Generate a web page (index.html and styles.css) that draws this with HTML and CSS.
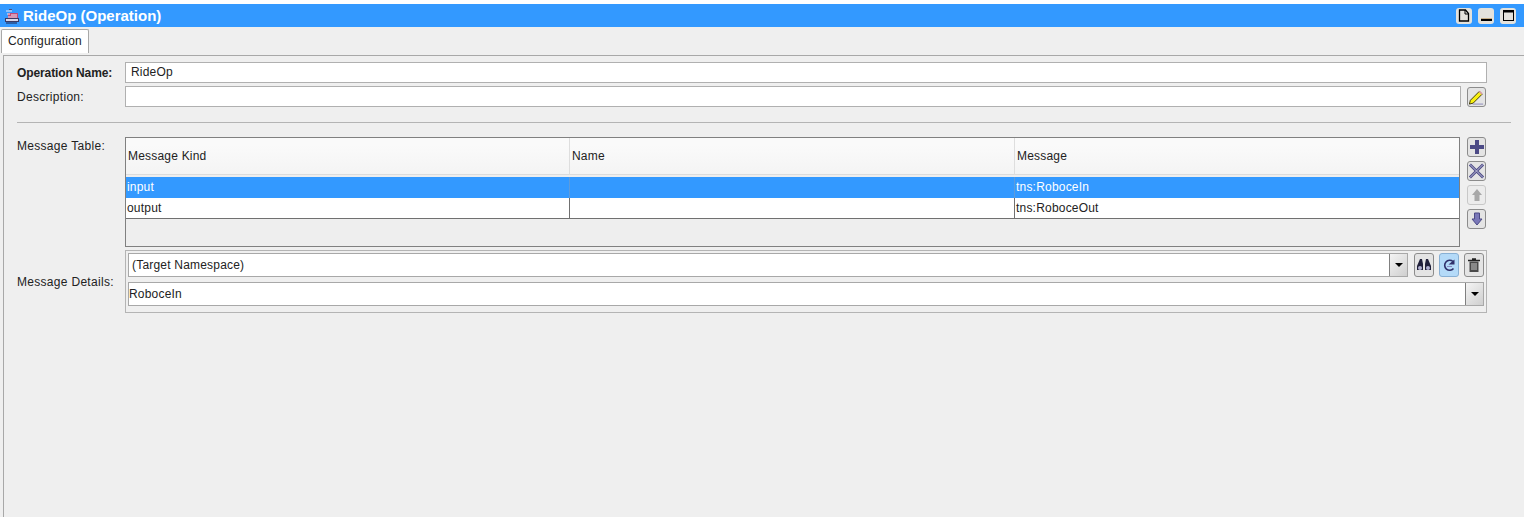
FILE: index.html
```html
<!DOCTYPE html>
<html lang="en">
<head>
<meta charset="utf-8">
<title>RideOp (Operation)</title>
<link rel="stylesheet" href="styles.css">
</head>
<body>
<div class="app">
  <header class="titlebar">
    <svg class="app-icon" width="16" height="16" viewBox="0 0 16 16">
      <rect x="1.500" y="10.500" width="13" height="3" fill="#d8d8ec" stroke="#3a3a66"/>
      <rect x="4" y="5" width="10" height="5" fill="#c04a78"/>
      <path d="M2 3h6M3 6h3M7 7h6M4 9h9" stroke="#e8e8f4"/>
      <path d="M5 1.500h3" stroke="#50507a"/>
      <path d="M2 15h11" stroke="#24244c"/>
    </svg>
    <h1 class="title">RideOp (Operation)</h1>
    <div class="win-buttons">
      <button class="win-btn"><svg width="12" height="13" viewBox="0 0 12 13"><path d="M1.500 1h6l3 3.500v7.500h-9z" fill="none" stroke="#000" stroke-width="1.300"/><path d="M7 1v4h4" fill="none" stroke="#000"/></svg></button>
      <button class="win-btn"><svg width="13" height="13" viewBox="0 0 13 13"><rect x="1" y="10" width="11" height="2" fill="#000"/><rect x="1" y="9" width="11" height="1" fill="#c8b088"/></svg></button>
      <button class="win-btn"><svg width="13" height="13" viewBox="0 0 13 13"><rect x="1.500" y="1.500" width="10" height="10" fill="none" stroke="#000"/><rect x="1" y="1" width="11" height="2.500" fill="#000"/></svg></button>
    </div>
  </header>
  <nav class="tabs"><span class="tab">Configuration</span></nav>
  <main class="panel">
    <div class="form-row row-name">
      <label class="label label-bold">Operation Name:</label>
      <div class="input">RideOp</div>
    </div>
    <div class="form-row row-desc">
      <label class="label">Description:</label>
      <div class="input"></div>
      <button class="icon-btn edit-btn"><svg width="18" height="18" viewBox="0 0 18 18"><path d="M2.500 12.500L12 3l3 3-9.500 9.500-4 1z" fill="#f8f010" stroke="#3a3610"/><path d="M12 3l3 3" stroke="#d8a0a0" stroke-width="2"/><path d="M5 16.500h11" stroke="#8a86b8"/></svg></button>
    </div>
    <hr class="separator">
    <div class="form-row row-table">
      <label class="label label-table">Message Table:</label>
      <div class="table">
        <div class="t-head">
          <span class="t-cell">Message Kind</span><span class="t-cell">Name</span><span class="t-cell">Message</span>
        </div>
        <div class="t-row t-selected">
          <span class="t-cell">input</span><span class="t-cell"></span><span class="t-cell">tns:RoboceIn</span>
        </div>
        <div class="t-row">
          <span class="t-cell">output</span><span class="t-cell"></span><span class="t-cell">tns:RoboceOut</span>
        </div>
      </div>
      <div class="side-buttons">
        <button class="icon-btn"><svg width="16" height="16" viewBox="0 0 16 16"><path d="M6 1h4v5h5v4h-5v5H6v-5H1V6h5z" fill="#4c4a86"/></svg></button>
        <button class="icon-btn"><svg width="18" height="18" viewBox="0 0 18 18"><path d="M2 2l14 14M16 2L2 16" stroke="#4c4a86" stroke-width="3"/><path d="M2 2l14 14M16 2L2 16" stroke="#c8c8e0" stroke-width="1"/></svg></button>
        <button class="icon-btn icon-disabled"><svg width="14" height="14" viewBox="0 0 14 14"><path d="M7 1l5 6H9.500v6h-5V7H2z" fill="#a8a8a8"/></svg></button>
        <button class="icon-btn"><svg width="14" height="14" viewBox="0 0 14 14"><path d="M4.500 1h5v6H12l-5 6-5-6h2.500z" fill="#7a78b8" stroke="#4c4a86"/></svg></button>
      </div>
    </div>
    <div class="form-row row-details">
      <label class="label">Message Details:</label>
      <div class="details">
        <div class="details-line">
          <div class="combo combo-top">
            <span class="combo-text combo-pad">(Target Namespace)</span>
            <span class="combo-arrow"></span>
          </div>
          <button class="icon-btn small"><svg width="16" height="16" viewBox="0 0 16 16"><path d="M4 2h2l1 5v6H1V9zM10 2h2l3 7v4H9V7z" fill="#20203a"/><circle cx="4" cy="11" r="2" fill="#b0b0d0"/><circle cx="12" cy="11" r="2" fill="#b0b0d0"/></svg></button>
          <button class="icon-btn small active"><svg width="16" height="16" viewBox="0 0 16 16"><path d="M12.500 11.500A5 5 0 1 1 12 4.500" fill="none" stroke="#30306a" stroke-width="1.600"/><path d="M7.500 7.500h6v-5z" fill="#30306a"/><path d="M6 9.500h5" stroke="#8888c0"/></svg></button>
          <button class="icon-btn small"><svg width="16" height="16" viewBox="0 0 16 16"><path d="M2 3.500h12M6 2h4" stroke="#222" stroke-width="1.500"/><path d="M3.500 4.500h9V15h-9z" fill="#4a4a4a"/><path d="M6 6v7M8 6v7M10 6v7" stroke="#c8c8c8"/></svg></button>
        </div>
        <div class="combo combo-full">
          <span class="combo-text">RoboceIn</span>
          <span class="combo-arrow"></span>
        </div>
      </div>
    </div>
  </main>
</div>
</body>
</html>
```

FILE: styles.css
```css
* { box-sizing: border-box; }
html, body { margin: 0; height: 100%; }
body {
  background: #fff;
  font-family: "Liberation Sans", Arial, sans-serif;
  font-size: 12px;
  letter-spacing: 0.2px;
  color: #222;
  overflow: hidden;
}
.app {
  height: 517px;
  background: #efefef;
  display: flex;
  flex-direction: column;
  border-top: 4px solid #fff;
}
.titlebar {
  height: 23px;
  background: #3399ff;
  display: flex;
  align-items: center;
  padding: 0 7px 0 4px;
  flex: none;
}
.app-icon { flex: none; margin-right: 3px; }
.title {
  margin: 0;
  font-size: 15px;
  font-weight: bold;
  letter-spacing: 0;
  color: #fff;
  flex: 1;
}
.win-buttons { display: flex; gap: 6px; margin-right: 1px; }
.win-btn {
  width: 16px;
  height: 16px;
  padding: 0;
  border: 0;
  border-radius: 3px;
  background: #e4e2dc;
  display: flex;
  align-items: center;
  justify-content: center;
}
.tabs {
  height: 28px;
  padding: 2px 0 0 1px;
  flex: none;
}
.tab {
  display: inline-block;
  height: 24px;
  width: 88px;
  line-height: 23px;
  text-align: center;
  background: #fff;
  border: 1px solid #a8a8a8;
  border-bottom: 0;
  border-radius: 2px 2px 0 0;
}
.panel {
  flex: 1;
  margin-left: 3px;
  border: 1px solid #a8a8a8;
  border-right: 0;
  border-bottom: 0;
  padding: 6px 13px 0 13px;
  display: flex;
  flex-direction: column;
}
.form-row { display: flex; align-items: center; width: 1470px; }
.label { width: 108px; flex: none; padding-top: 1px; letter-spacing: 0.3px; }
.label-bold { font-weight: bold; letter-spacing: -0.1px; }
.input {
  height: 21px;
  flex: 1;
  background: #fff;
  border: 1px solid #b0b0b0;
  line-height: 19px;
  padding-left: 5px;
}
.row-name { margin-bottom: 3px; }
.edit-btn {
  margin-left: 6px;
  margin-right: 1px;
  border-color: #606060;
  background: linear-gradient(135deg, #f0eee4, #d8d4e8);
}
.icon-btn {
  width: 19px;
  height: 20px;
  padding: 0;
  flex: none;
  background: #e4e4e4;
  border: 1px solid #8c8c8c;
  border-radius: 3px;
  display: flex;
  align-items: center;
  justify-content: center;
}
.small { width: 20px; height: 24px; }
.icon-disabled { border-color: #c8c8c8; background: #ececec; }
.active { background: #b4daf8; border-color: #88b0d4; }
.separator {
  width: 1494px;
  margin: 15px 0 14px;
  border: 0;
  border-top: 1px solid #b4b4b4;
}
.row-table { align-items: flex-start; }
.label-table { padding-top: 2px; }
.table {
  width: 1335px;
  height: 110px;
  flex: none;
  background: #eeeeee;
  border: 1px solid #808080;
}
.t-head, .t-row { display: grid; grid-template-columns: 444px 445px 1fr; }
.t-head {
  height: 37px;
  background: linear-gradient(#fafafa 20%, #f4f4f4);
  border-bottom: 1px solid #dcdcdc;
  margin-bottom: 2px;
}
.t-head .t-cell { line-height: 37px; padding-left: 2px; border-right: 1px solid #dedede; }
.t-row { height: 21px; background: #fff; }
.t-row:last-child { border-bottom: 1px solid #707070; }
.t-row .t-cell { padding-left: 1px; line-height: 21px; border-right: 1px solid #707070; }
.t-head .t-cell:last-child, .t-row .t-cell:last-child { border-right: 0; }
.t-selected { background: #3399ff; color: #fff; }
.t-selected .t-cell { border-right-color: #5d9bdb; }
.side-buttons {
  display: flex;
  flex-direction: column;
  gap: 4px;
  margin-left: 7px;
}
.row-details { margin-top: 3px; }
.details {
  width: 1362px;
  height: 63px;
  flex: none;
  border: 1px solid #b4b4b4;
  padding: 2px;
  display: flex;
  flex-direction: column;
  gap: 5px;
}
.details-line { display: flex; gap: 5px; align-items: center; height: 24px; }
.combo {
  height: 24px;
  flex: 1;
  display: flex;
  align-items: stretch;
  background: #fff;
  border: 1px solid #a8a8a8;
}
.combo-top { margin-right: 1px; }
.combo-text { flex: 1; line-height: 23px; }
.combo-pad { padding-left: 3px; }
.combo-full { flex: none; width: 1356px; }
.combo-arrow {
  width: 18px;
  flex: none;
  background: linear-gradient(135deg, #f4f4f4, #cfcfcf);
  border-left: 1px solid #808080;
  display: flex;
  align-items: center;
  justify-content: center;
}
.combo-arrow::after {
  content: "";
  border-left: 4px solid transparent;
  border-right: 4px solid transparent;
  border-top: 4px solid #000;
}
```
